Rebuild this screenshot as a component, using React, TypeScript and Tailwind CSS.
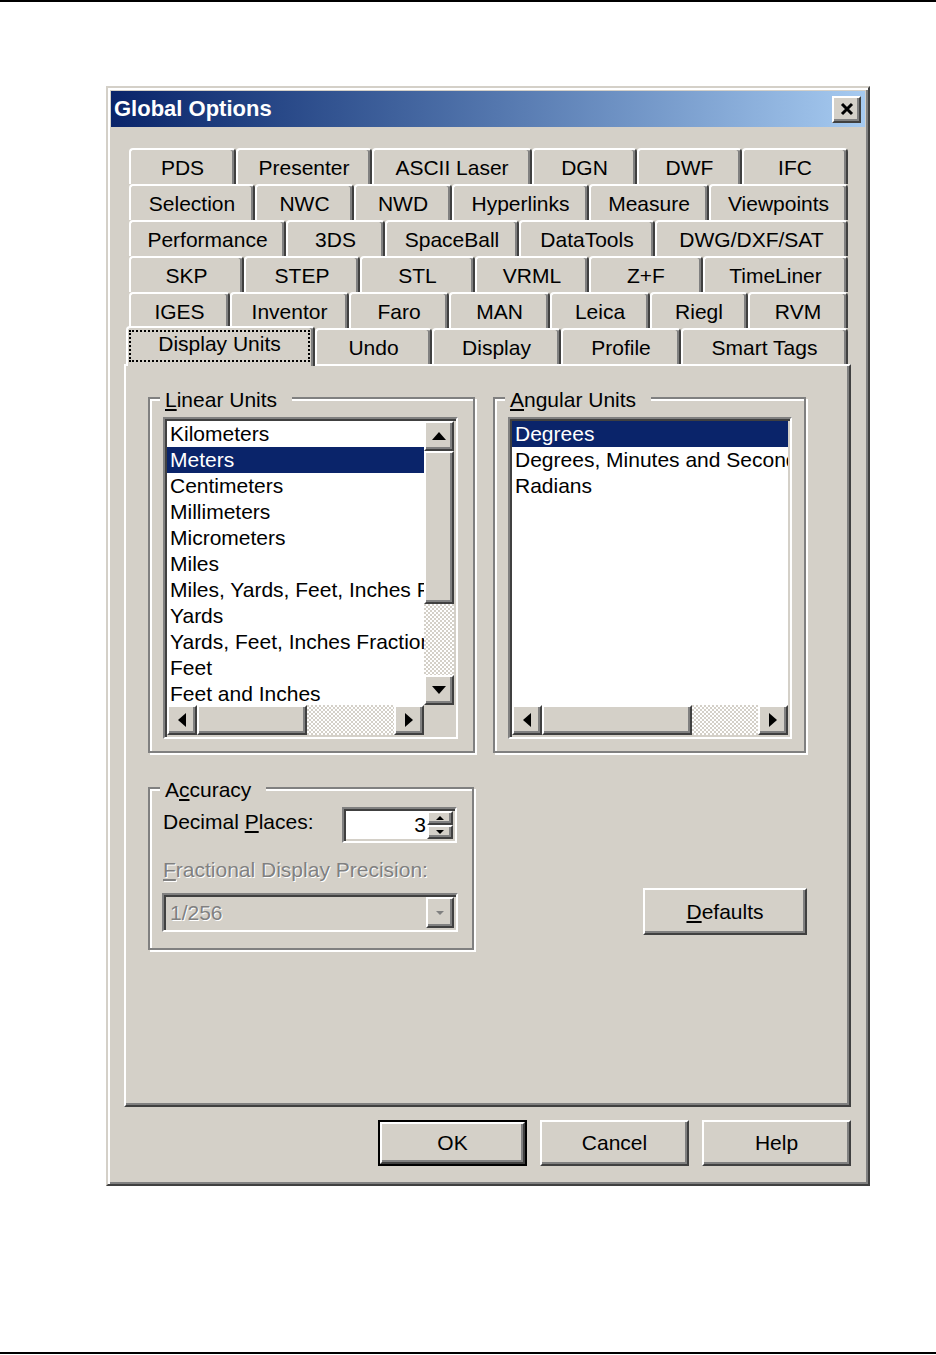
import React from 'react';

type Dir = 'up' | 'down' | 'left' | 'right';

const raised =
  'bg-[#d4d0c8] border-2 border-t-white border-l-white border-r-[#404040] border-b-[#404040] shadow-[inset_-2px_-2px_0_#808080]';
const sunken =
  'border-2 border-t-[#808080] border-l-[#808080] border-r-white border-b-white shadow-[inset_2px_2px_0_#404040,inset_-2px_-2px_0_#d4d0c8]';
const etched = 'border-2 border-[#808080] shadow-[inset_2px_2px_0_#fff,2px_2px_0_#fff]';
const dither =
  'bg-[image:repeating-conic-gradient(#fff_0_25%,#d4d0c8_0_50%)] bg-[length:4px_4px] bg-size-[4px_4px]';

const tabRows: [string, number][][] = [
  [['PDS', 107], ['Presenter', 136], ['ASCII Laser', 160], ['DGN', 105], ['DWF', 105], ['IFC', 106]],
  [['Selection', 126], ['NWC', 99], ['NWD', 98], ['Hyperlinks', 137], ['Measure', 120], ['Viewpoints', 139]],
  [['Performance', 157], ['3DS', 99], ['SpaceBall', 134], ['DataTools', 136], ['DWG/DXF/SAT', 193]],
  [['SKP', 115], ['STEP', 116], ['STL', 115], ['VRML', 114], ['Z+F', 114], ['TimeLiner', 145]],
  [['IGES', 101], ['Inventor', 119], ['Faro', 100], ['MAN', 101], ['Leica', 100], ['Riegl', 98], ['RVM', 100]],
];

const frontRow: [string, number][] = [['Undo', 117], ['Display', 129], ['Profile', 120], ['Smart Tags', 167]];

const linearUnits = [
  'Kilometers',
  'Meters',
  'Centimeters',
  'Millimeters',
  'Micrometers',
  'Miles',
  'Miles, Yards, Feet, Inches Fraction',
  'Yards',
  'Yards, Feet, Inches Fraction',
  'Feet',
  'Feet and Inches',
];

const angularUnits = ['Degrees', 'Degrees, Minutes and Seconds', 'Radians'];

const Arrow: React.FC<{ dir: Dir; color?: string; small?: boolean }> = ({ dir, color = '#000', small }) => {
  if (dir === 'up' || dir === 'down') {
    const w = small ? 8 : 14;
    const h = small ? 4 : 8;
    const pts = dir === 'up' ? `${w / 2},0 ${w},${h} 0,${h}` : `0,0 ${w},0 ${w / 2},${h}`;
    return (
      <svg width={w} height={h} viewBox={`0 0 ${w} ${h}`}>
        <polygon points={pts} fill={color} />
      </svg>
    );
  }
  const pts = dir === 'left' ? '0,7 8,0 8,14' : '0,0 8,7 0,14';
  return (
    <svg width={8} height={14} viewBox="0 0 8 14">
      <polygon points={pts} fill={color} />
    </svg>
  );
};

const ScrollBtn: React.FC<{ dir: Dir }> = ({ dir }) => (
  <div className={`${raised} w-[30px] h-[30px] shrink-0 flex items-center justify-center`}>
    <Arrow dir={dir} />
  </div>
);

const Tab: React.FC<{ label: string; width: number }> = ({ label, width }) => (
  <div
    style={{ width }}
    className="h-[36px] shrink-0 flex items-center justify-center pt-[2px] whitespace-nowrap rounded-t-[4px] border-t-2 border-l-2 border-r-2 border-t-white border-l-white border-r-[#404040] shadow-[inset_-2px_0_0_#808080]"
  >
    {label}
  </div>
);

const GroupBox: React.FC<{ label: React.ReactNode; className: string; children: React.ReactNode }> = ({
  label,
  className,
  children,
}) => (
  <div className={`relative ${etched} ${className}`}>
    <span className="absolute -top-[11px] left-[10px] pl-[5px] pr-[15px] bg-[#d4d0c8] leading-[24px]">{label}</span>
    {children}
  </div>
);

const ListBox: React.FC<{
  items: string[];
  selected: number;
  width: string;
  vscroll?: boolean;
}> = ({ items, selected, width, vscroll }) => (
  <div className={`${sunken} ${width} h-[322px] bg-white p-[2px] flex flex-col`}>
    <div className="flex h-[284px]">
      <div className="flex-1 h-full overflow-hidden">
        {items.map((it, i) => (
          <div
            key={it}
            className={`h-[26px] leading-[26px] pl-[3px] whitespace-nowrap ${
              i === selected ? 'bg-[#0a246a] text-white' : ''
            }`}
          >
            {it}
          </div>
        ))}
      </div>
      {vscroll && (
        <div className="w-[30px] flex flex-col">
          <ScrollBtn dir="up" />
          <div className={`${raised} h-[153px]`} />
          <div className={`${dither} flex-1`} />
          <ScrollBtn dir="down" />
        </div>
      )}
    </div>
    <div className="flex h-[30px]">
      <ScrollBtn dir="left" />
      <div className={`${raised} ${vscroll ? 'w-[110px]' : 'w-[150px]'}`} />
      <div className={`${dither} flex-1`} />
      <ScrollBtn dir="right" />
      {vscroll && <div className="w-[30px] bg-[#d4d0c8]" />}
    </div>
  </div>
);

const Button: React.FC<{ children: React.ReactNode; isDefault?: boolean; className?: string }> = ({
  children,
  isDefault,
  className = 'w-[149px] h-[46px]',
}) =>
  isDefault ? (
    <div className={`${className} border-2 border-black`}>
      <div className={`${raised} w-full h-full flex items-center justify-center`}>{children}</div>
    </div>
  ) : (
    <div className={`${raised} ${className} flex items-center justify-center`}>{children}</div>
  );

export default function App() {
  return (
    <div className="w-[936px] h-[1355px] bg-white flex flex-col font-['Liberation_Sans',Arial,sans-serif] text-[21px] text-black">
      <div className="h-[2px] bg-black" />

      {/* dialog */}
      <div className="ml-[106px] mt-[84px] w-[764px] h-[1100px] bg-[#d4d0c8] p-[3px] border-2 border-t-[#d4d0c8] border-l-[#d4d0c8] border-r-[#404040] border-b-[#404040] shadow-[inset_2px_2px_0_#fff,inset_-2px_-2px_0_#808080] flex flex-col">
        {/* title bar */}
        <div className="h-[36px] bg-linear-to-r from-[#0a246a] to-[#a6caf0] flex items-center justify-between pl-[3px] pr-[4px]">
          <span className="text-white font-bold text-[22px] leading-none">Global Options</span>
          <div className={`${raised} w-[29px] h-[27px] flex items-center justify-center`}>
            <svg width="14" height="14" viewBox="0 0 14 14">
              <path d="M2 2 L12 12 M12 2 L2 12" stroke="#000" strokeWidth="3" />
            </svg>
          </div>
        </div>

        <div className="pl-[13px] pt-[21px] flex flex-col">
          {/* tab rows */}
          {tabRows.map((row, r) => (
            <div key={r} className="ml-[5px] w-[719px] flex">
              {row.map(([l, w]) => (
                <Tab key={l} label={l} width={w} />
              ))}
            </div>
          ))}
          <div className="ml-[5px] w-[719px] h-[36px] flex items-start">
            <div className="relative z-10 -ml-[3px] -mt-[2px] w-[189px] h-[40px] shrink-0 bg-[#d4d0c8] rounded-t-[4px] border-t-2 border-l-2 border-r-2 border-t-white border-l-white border-r-[#404040] shadow-[inset_-2px_0_0_#808080] pt-[2px] pl-[1px] pr-[3px]">
              <div className="h-[32px] border-2 border-dotted border-black flex items-center justify-center pb-[4px]">
                Display Units
              </div>
            </div>
            {frontRow.map(([l, w]) => (
              <Tab key={l} label={l} width={w} />
            ))}
          </div>

          {/* tab panel */}
          <div className="w-[727px] h-[743px] border-2 border-t-white border-l-white border-r-[#404040] border-b-[#404040] shadow-[inset_-2px_-2px_0_#808080] pl-[22px] pt-[31px] flex flex-col">
            <div className="flex gap-[18px]">
              <GroupBox
                label={
                  <>
                    <u>L</u>inear Units
                  </>
                }
                className="w-[327px] h-[356px] pl-[13px] pt-[18px]"
              >
                <ListBox items={linearUnits} selected={1} width="w-[295px]" vscroll />
              </GroupBox>
              <GroupBox
                label={
                  <>
                    <u>A</u>ngular Units
                  </>
                }
                className="w-[313px] h-[356px] pl-[13px] pt-[18px]"
              >
                <ListBox items={angularUnits} selected={0} width="w-[284px]" />
              </GroupBox>
            </div>

            <div className="flex items-start mt-[34px]">
              <GroupBox
                label={
                  <>
                    A<u>c</u>curacy
                  </>
                }
                className="w-[326px] h-[163px] pl-[13px] pr-[15px] pt-[18px]"
              >
                <div className="flex items-center justify-between h-[36px]">
                  <span className="-mt-[6px]">
                    Decimal <u>P</u>laces:
                  </span>
                  <div className={`${sunken} w-[115px] h-[36px] bg-white p-[2px] flex`}>
                    <div className="flex-1 text-right pr-[1px] leading-[28px]">3</div>
                    <div className="w-[26px] flex flex-col">
                      <div className={`${raised} h-[14px] flex items-center justify-center`}>
                        <Arrow dir="up" small />
                      </div>
                      <div className={`${raised} h-[14px] flex items-center justify-center`}>
                        <Arrow dir="down" small />
                      </div>
                    </div>
                  </div>
                </div>
                <div className="mt-[15px] leading-[24px] text-[#808080] [text-shadow:1px_1px_0_#fff] whitespace-nowrap">
                  <u>F</u>ractional Display Precision:
                </div>
                <div className={`${sunken} -ml-[1px] mt-[11px] w-[296px] h-[39px] bg-[#d4d0c8] p-[2px] flex items-center`}>
                  <span className="flex-1 pl-[4px] text-[#808080] [text-shadow:1px_1px_0_#fff]">1/256</span>
                  <div className={`${raised} w-[28px] h-[31px] flex items-center justify-center`}>
                    <Arrow dir="down" color="#808080" small />
                  </div>
                </div>
              </GroupBox>
              <div className="ml-[169px] mt-[101px]">
                <Button className="w-[164px] h-[47px]">
                  <span>
                    <u>D</u>efaults
                  </span>
                </Button>
              </div>
            </div>
          </div>

          {/* bottom buttons */}
          <div className="w-[727px] mt-[13px] flex justify-end gap-[13px]">
            <Button isDefault>OK</Button>
            <Button>Cancel</Button>
            <Button>Help</Button>
          </div>
        </div>
      </div>

      <div className="flex-1" />
      <div className="h-[2px] bg-black mb-[1px]" />
    </div>
  );
}
